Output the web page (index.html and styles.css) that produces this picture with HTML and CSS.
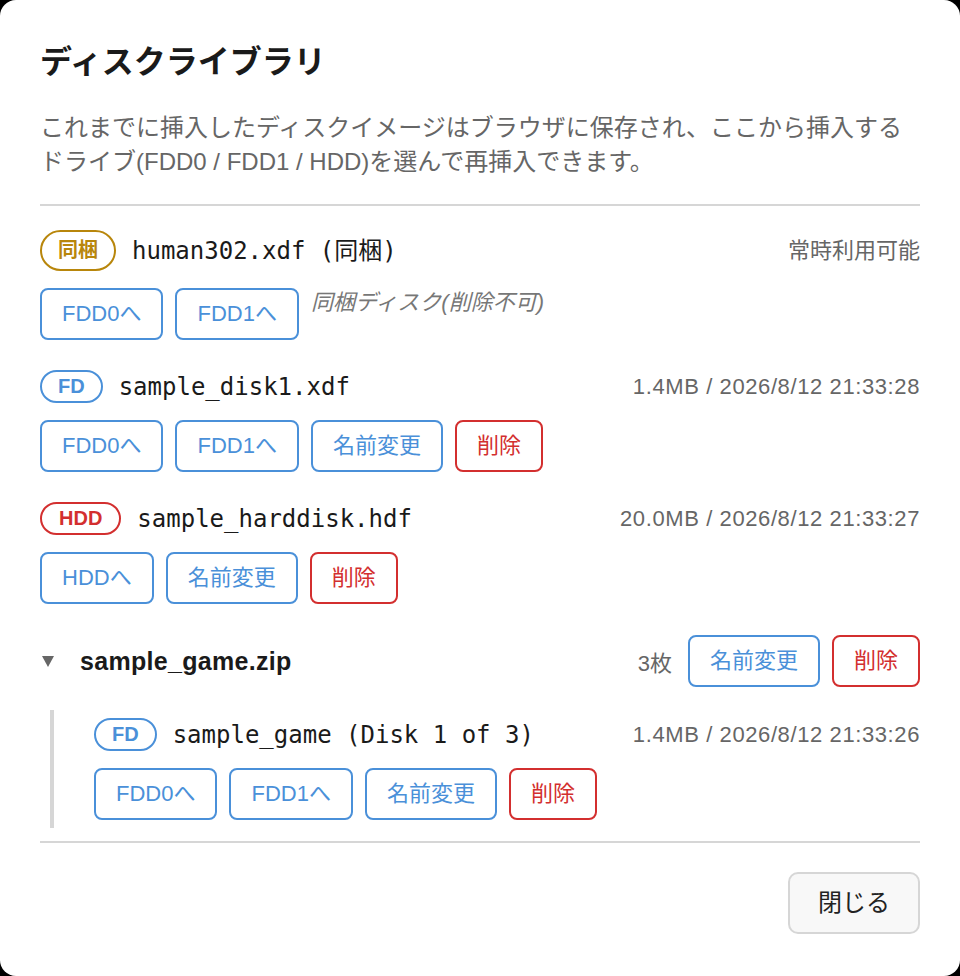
FILE: index.html
```html
<!DOCTYPE html>
<html lang="ja">
<head>
    <meta charset="UTF-8">
    <meta name="viewport" content="width=device-width, initial-scale=1.0">
    <title>ディスクライブラリ</title>
    <link rel="stylesheet" href="styles.css">
</head>
<body>
    <div class="dialog">
        <h2 class="dialog-title">ディスクライブラリ</h2>
        <p class="dialog-desc">これまでに挿入したディスクイメージはブラウザに保存され、ここから挿入するドライブ(FDD0 / FDD1 / HDD)を選んで再挿入できます。</p>

        <div class="disk-list">
            <!-- Bundled disk: cannot be renamed or deleted -->
            <div class="disk-item">
                <div class="disk-head">
                    <span class="badge badge-bundled">同梱</span>
                    <span class="disk-name">human302.xdf (同梱)</span>
                    <span class="disk-meta">常時利用可能</span>
                </div>
                <div class="disk-actions">
                    <button class="btn">FDD0へ</button>
                    <button class="btn">FDD1へ</button>
                    <span class="disk-note">同梱ディスク(削除不可)</span>
                </div>
            </div>

            <div class="disk-item">
                <div class="disk-head">
                    <span class="badge badge-fd">FD</span>
                    <span class="disk-name">sample_disk1.xdf</span>
                    <span class="disk-meta disk-stamp">1.4MB / 2026/8/12 21:33:28</span>
                </div>
                <div class="disk-actions">
                    <button class="btn">FDD0へ</button>
                    <button class="btn">FDD1へ</button>
                    <button class="btn">名前変更</button>
                    <button class="btn btn-danger">削除</button>
                </div>
            </div>

            <div class="disk-item">
                <div class="disk-head">
                    <span class="badge badge-hdd">HDD</span>
                    <span class="disk-name">sample_harddisk.hdf</span>
                    <span class="disk-meta disk-stamp">20.0MB / 2026/8/12 21:33:27</span>
                </div>
                <div class="disk-actions">
                    <button class="btn">HDDへ</button>
                    <button class="btn">名前変更</button>
                    <button class="btn btn-danger">削除</button>
                </div>
            </div>

            <!-- Zip archive with several disks -->
            <div class="disk-group">
                <div class="group-head">
                    <span class="group-toggle"></span>
                    <span class="group-name">sample_game.zip</span>
                    <span class="group-count">3枚</span>
                    <button class="btn">名前変更</button>
                    <button class="btn btn-danger">削除</button>
                </div>
                <div class="group-body">
                    <div class="disk-item">
                        <div class="disk-head">
                            <span class="badge badge-fd">FD</span>
                            <span class="disk-name">sample_game (Disk 1 of 3)</span>
                            <span class="disk-meta disk-stamp">1.4MB / 2026/8/12 21:33:26</span>
                        </div>
                        <div class="disk-actions">
                            <button class="btn">FDD0へ</button>
                            <button class="btn">FDD1へ</button>
                            <button class="btn">名前変更</button>
                            <button class="btn btn-danger">削除</button>
                        </div>
                    </div>
                </div>
            </div>
        </div>

        <div class="dialog-footer">
            <button class="btn-close">閉じる</button>
        </div>
    </div>
</body>
</html>
```

FILE: styles.css
```css
body {
    margin: 0;
    background-color: #000;
    font-family: "Liberation Sans", "Noto Sans CJK JP", sans-serif;
    color: #1a1a1a;
}

/* Dialog box */
.dialog {
    background-color: #fff;
    border-radius: 16px;
    padding: 40px 40px 41px;
    min-height: 100vh;
    box-sizing: border-box;
}

.dialog-title {
    margin: 0;
    font-size: 32px;
    line-height: 45px;
    font-weight: bold;
    color: #1a1a1a;
}

.dialog-desc {
    margin: 26px 0 25px;
    font-size: 24px;
    line-height: 34px;
    color: #666;
}

/* Disk list */
.disk-list {
    display: flex;
    flex-direction: column;
    gap: 30px;
    border-top: 2px solid #d6d6d6;
    border-bottom: 2px solid #d6d6d6;
    padding: 24px 0 13px;
}

.disk-head {
    display: flex;
    align-items: center;
    gap: 16px;
}

.disk-name {
    font-family: "DejaVu Sans Mono", "Noto Sans CJK JP", monospace;
    font-size: 24px;
    line-height: 32px;
    color: #1a1a1a;
}

.disk-meta {
    margin-left: auto;
    font-size: 22px;
    line-height: 30px;
    color: #666;
}

/* size / date line is a little wider */
.disk-stamp {
    letter-spacing: 0.6px;
}

.badge {
    display: inline-block;
    padding: 4px 16px;
    border: 2px solid;
    border-radius: 999px;
    font-size: 20px;
    line-height: 21px;
    font-weight: bold;
}

.badge-fd {
    color: #4a90d9;
    border-color: #4a90d9;
}

.badge-hdd {
    color: #d32f2f;
    border-color: #d32f2f;
    padding: 4px 17px;
}

.badge-bundled {
    color: #b8860b;
    border-color: #b8860b;
    line-height: 29px;
}

.disk-actions {
    display: flex;
    align-items: flex-start;
    gap: 12px;
    margin-top: 17px;
}

.disk-note {
    font-size: 22px;
    line-height: 30px;
    font-style: italic;
    color: #777;
}

/* Buttons */
.btn {
    font-family: inherit;
    font-size: 22px;
    line-height: 28px;
    padding: 10px 20px;
    background-color: #fff;
    color: #4a90d9;
    border: 2px solid #4a90d9;
    border-radius: 8px;
    cursor: pointer;
}

.btn-danger {
    color: #d32f2f;
    border-color: #d32f2f;
}

/* Zip group */
.disk-group {
    margin-top: 1px;
}

.group-head {
    display: flex;
    align-items: center;
    gap: 12px;
}

.group-toggle {
    width: 0;
    height: 0;
    margin-left: 2px;
    margin-right: 14px;
    border-left: 6px solid transparent;
    border-right: 6px solid transparent;
    border-top: 11px solid #666;
}

.group-name {
    font-size: 25px;
    letter-spacing: 0.3px;
    font-weight: bold;
    color: #1a1a1a;
}

.group-count {
    margin-left: auto;
    margin-right: 4px;
    font-size: 22px;
    color: #666;
}

.group-body {
    margin: 23px 0 0 10px;
    padding: 8px 0 8px 40px;
    border-left: 4px solid #d6d6d6;
}

/* Footer */
.dialog-footer {
    display: flex;
    justify-content: flex-end;
    margin-top: 29px;
}

.btn-close {
    font-family: inherit;
    font-size: 24px;
    line-height: 30px;
    padding: 14px 28px;
    background-color: #f8f8f8;
    color: #222;
    border: 2px solid #d6d6d6;
    border-radius: 10px;
    cursor: pointer;
}
```
